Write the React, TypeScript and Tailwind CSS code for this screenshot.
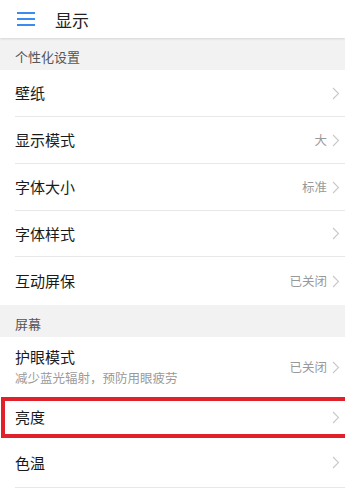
const font = { fontFamily: '"Noto Sans CJK SC", "Noto Sans", sans-serif' };

function Chevron() {
  return (
    <svg width="8" height="13" viewBox="0 0 8 13" className="ml-[5px] shrink-0">
      <path d="M1 1 L6.5 6.5 L1 12" fill="none" stroke="#c8c8c8" strokeWidth="1.1" />
    </svg>
  );
}

function Section({ title }: { title: string }) {
  return (
    <div className="h-[32px] bg-[#f2f2f2] flex items-end pb-[4px] px-[15px] text-[13px] text-[#555]">
      {title}
    </div>
  );
}

function Row({
  label,
  value,
  sub,
  divider = true,
  h = 47,
}: {
  label: string;
  value?: string;
  sub?: string;
  divider?: boolean;
  h?: number;
}) {
  return (
    <div className="pl-[15px] bg-white">
      <div
        className={
          "flex items-center pr-[5px] " + (divider ? "border-b border-[#e8e8e8]" : "")
        }
        style={{ height: h }}
      >
        <div className="flex-1 flex flex-col">
          <span className="text-[15px] text-[#1a1a1a] leading-[20px]">{label}</span>
          {sub && <span className="text-[12.5px] text-[#9a9a9a] leading-[18px] mt-[2px]">{sub}</span>}
        </div>
        {value && <span className="text-[12.5px] text-[#999]">{value}</span>}
        <Chevron />
      </div>
    </div>
  );
}

export default function App() {
  return (
    <div className="w-[345px] h-[490px] bg-white overflow-hidden" style={font}>
      <div className="h-[38px] flex items-center bg-white shadow-[0_1px_2px_rgba(0,0,0,0.12)] relative z-10">
        <div className="ml-[17px] w-[18px] flex flex-col gap-[4px]">
          <div className="h-[2px] bg-[#3b8cef]" />
          <div className="h-[2px] bg-[#3b8cef]" />
          <div className="h-[2px] bg-[#3b8cef]" />
        </div>
        <span className="ml-[20px] text-[17px] text-[#222] leading-none">显示</span>
      </div>
      <Section title="个性化设置" />
      <Row label="壁纸" />
      <Row label="显示模式" value="大" />
      <Row label="字体大小" value="标准" />
      <Row label="字体样式" h={46} />
      <Row label="互动屏保" value="已关闭" divider={false} h={48} />
      <Section title="屏幕" />
      <Row label="护眼模式" sub="减少蓝光辐射，预防用眼疲劳" value="已关闭" divider={false} h={60} />
      <div className="ml-[1px] border-[4px] border-r-0 border-[#e0202a] h-[41px] flex items-center pl-[10px] pr-[5px]">
        <span className="flex-1 text-[15px] text-[#1a1a1a]">亮度</span>
        <Chevron />
      </div>
      <Row label="色温" h={50} />
    </div>
  );
}
